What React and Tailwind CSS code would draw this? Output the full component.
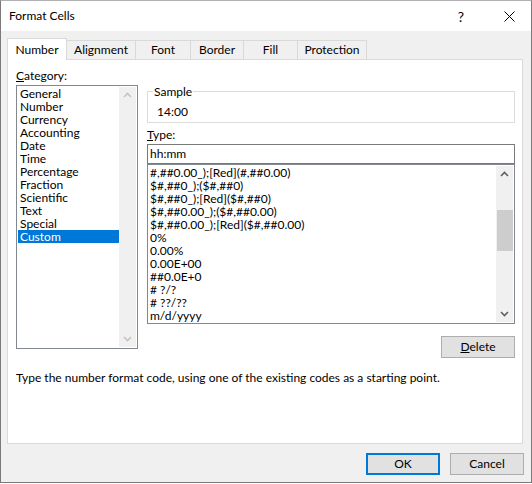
import React from 'react';

const categories = ['General', 'Number', 'Currency', 'Accounting', 'Date', 'Time', 'Percentage', 'Fraction', 'Scientific', 'Text', 'Special', 'Custom'];

const formats = [
    '#,##0.00_);[Red](#,##0.00)',
    '$#,##0_);($#,##0)',
    '$#,##0_);[Red]($#,##0)',
    '$#,##0.00_);($#,##0.00)',
    '$#,##0.00_);[Red]($#,##0.00)',
    '0%',
    '0.00%',
    '0.00E+00',
    '##0.0E+0',
    '# ?/?',
    '# ??/??',
    'm/d/yyyy',
];

const tabs = [
    { label: 'Alignment', w: 'w-[69px]' },
    { label: 'Font', w: 'w-[55px]' },
    { label: 'Border', w: 'w-[53px]' },
    { label: 'Fill', w: 'w-[54px]' },
    { label: 'Protection', w: 'w-[69px]' },
];

// small chevron used by the list scrollbars
const Chevron = ({ down = false, color }) => (
    <svg width="9" height="6" viewBox="0 0 9 6" className="block">
        <path d={down ? 'M1 1 L4.5 4.5 L8 1' : 'M1 5 L4.5 1.5 L8 5'} fill="none" stroke={color} strokeWidth="1.6" />
    </svg>
);

const Button = ({ children, primary = false, className = '' }) => (
    <div
        className={`h-[22px] w-[74px] flex items-center justify-center bg-[#e1e1e1] text-[12px] text-black ${
            primary ? 'border-2 border-[#0078d7]' : 'border border-[#adadad]'
        } ${className}`}
    >
        {children}
    </div>
);

export default function App() {
    return (
        <div className="w-[532px] h-[484px] bg-white overflow-hidden" style={{ fontFamily: 'Lato, "Noto Sans", sans-serif' }}>
            <div className="h-[483px] flex flex-col border-x border-b border-t border-[#7a7a7a] border-t-[#b0b0b0]">
                {/* title bar */}
                <div className="h-[30px] bg-white flex items-center shrink-0">
                    <span className="pl-[8px] text-[12px] text-black">Format Cells</span>
                    <span className="ml-auto text-[14px] text-black mr-[40px]">?</span>
                    <svg width="11" height="11" viewBox="0 0 11 11" className="mr-[16px]">
                        <path d="M0.5 0.5 L10.5 10.5 M10.5 0.5 L0.5 10.5" stroke="#000" strokeWidth="1" />
                    </svg>
                </div>

                {/* body */}
                <div className="flex-1 bg-[#f0f0f0] px-[6px] pt-[7px] flex flex-col">
                    {/* tabs */}
                    <div className="h-[21px] flex items-end text-[12px] text-black">
                        <div className="relative z-10 -mb-px h-[22px] w-[60px] bg-white border border-b-0 border-[#d9d9d9] flex items-center justify-center">
                            Number
                        </div>
                        {tabs.map((t) => (
                            <div key={t.label} className={`h-[19px] ${t.w} border border-b-0 border-l-0 border-[#d9d9d9] bg-[#f0f0f0] flex items-center justify-center`}>
                                {t.label}
                            </div>
                        ))}
                    </div>

                    {/* panel */}
                    <div className="w-[516px] h-[385px] bg-white border border-[#d9d9d9] pl-[8px] pt-[8px] text-[12px] text-black">
                        <div className="flex gap-[9px]">
                            {/* category column */}
                            <div className="w-[122px] flex flex-col">
                                <div className="h-[16px] leading-[16px] mb-[1px]"><span className="underline">C</span>ategory:</div>
                                <div className="h-[264px] border border-[#828790] p-[1px] flex">
                                    <div className="flex-1 flex flex-col">
                                        {categories.map((c) => (
                                            <div
                                                key={c}
                                                className={`h-[13px] leading-[13px] pl-[2px] ${c === 'Custom' ? 'bg-[#0078d7] text-white' : ''}`}
                                            >
                                                {c}
                                            </div>
                                        ))}
                                    </div>
                                    <div className="w-[17px] bg-[#f0f0f0] flex flex-col items-center justify-between py-[5px]">
                                        <Chevron color="#c3c3c3" />
                                        <Chevron down color="#c3c3c3" />
                                    </div>
                                </div>
                            </div>

                            {/* right column */}
                            <div className="w-[368px] flex flex-col">
                                <div className="relative mt-[23px] h-[32px] border border-[#dcdcdc]">
                                    <span className="absolute -top-[7px] left-[5px] bg-white px-[1px] leading-[13px]">Sample</span>
                                    <div className="pl-[9px] pt-[12px] leading-[16px]">14:00</div>
                                </div>
                                <div className="h-[16px] leading-[16px] mt-[4px] mb-[1px]"><span className="underline">T</span>ype:</div>
                                <div className="h-[20px] border border-[#7a7a7a] pl-[2px] leading-[18px]">hh:mm</div>
                                <div className="h-[160px] border border-[#828790] p-[1px] flex">
                                    <div className="flex-1 flex flex-col">
                                        {formats.map((f) => (
                                            <div key={f} className="h-[13px] leading-[13px] pl-[1px] whitespace-nowrap">{f}</div>
                                        ))}
                                    </div>
                                    <div className="w-[17px] bg-[#f0f0f0] flex flex-col items-center py-[5px]">
                                        <Chevron color="#606060" />
                                        <div className="mt-[33px] w-[16px] h-[41px] bg-[#cdcdcd]" />
                                        <div className="mt-auto"><Chevron down color="#606060" /></div>
                                    </div>
                                </div>
                                <Button className="self-end mt-[12px]"><span><span className="underline">D</span>elete</span></Button>
                            </div>
                        </div>
                        <div className="mt-[12px] leading-[16px]">Type the number format code, using one of the existing codes as a starting point.</div>
                    </div>

                    {/* dialog buttons */}
                    <div className="flex justify-end gap-[10px] mt-[9px] mr-[1px]">
                        <Button primary>OK</Button>
                        <Button>Cancel</Button>
                    </div>
                </div>
            </div>
        </div>
    );
}
